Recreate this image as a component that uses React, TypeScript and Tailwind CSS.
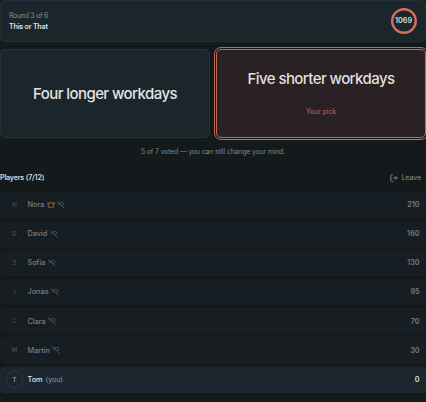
import React from "react"
import clsx from "clsx"

type Player = {
  name: string
  score: number
  host?: boolean
  you?: boolean
}

const players: Player[] = [
  { name: "Nora", score: 210, host: true },
  { name: "David", score: 160 },
  { name: "Sofia", score: 130 },
  { name: "Jonas", score: 95 },
  { name: "Clara", score: 70 },
  { name: "Martin", score: 30 },
  { name: "Tom", score: 0, you: true },
]

function CrownIcon() {
  return (
    <svg className="h-[7px] w-[8px] shrink-0 text-[#85592a]" viewBox="0 0 16 14" fill="none" stroke="currentColor" strokeWidth="2.2" strokeLinejoin="round">
      <path d="M1.500 3 4.800 5.500 8 2l3.200 3.500L14.500 3l-1.800 9.500H3.300L1.500 3Z" />
    </svg>
  )
}

function OfflineIcon() {
  return (
    <svg className="size-[8px] shrink-0 text-[#555b60]" viewBox="0 0 16 16" fill="none" stroke="currentColor" strokeWidth="1.8" strokeLinecap="round" strokeLinejoin="round">
      <path d="m1.500 1.500 13 13" />
      <path d="M1.500 5.500 3.500 4M7 3c3-.4 5.500.5 7.500 2.500L11 9" />
      <path d="M4.500 8c.8-.8 1.700-1.200 2.700-1.400" />
    </svg>
  )
}

function LeaveIcon() {
  return (
    <svg className="size-[8px]" viewBox="0 0 18 18" fill="none" stroke="currentColor" strokeWidth="2" strokeLinecap="round" strokeLinejoin="round">
      <path d="M6 1.500H3.500C2.700 1.500 2 2.200 2 3v12c0 .8.7 1.500 1.500 1.500H6" />
      <path d="M8 9h8M12.500 5.500 16 9l-3.500 3.500" />
    </svg>
  )
}

function TimerRing({ value }: { value: number }) {
  return (
    <div className="relative flex size-[26px] items-center justify-center text-[7.2px] font-semibold text-[#dce0df]">
      <svg className="absolute inset-0 size-full text-[#d3705a]" viewBox="0 0 26 26" fill="none">
        <circle cx="13" cy="13" r="11.800" stroke="currentColor" strokeWidth="2.400" />
      </svg>
      <span className="relative">{value}</span>
    </div>
  )
}

function PlayerRow({ player }: { player: Player }) {
  return (
    <li
      className={clsx(
        "flex h-[26px] items-center rounded-[4px] border pr-[5.5px] pl-[5px]",
        player.you ? "border-[#1e2930] bg-[#1b262e]" : "border-[#181f24] bg-[#171e23]"
      )}
    >
      <span
        className={clsx(
          "flex size-[17px] shrink-0 items-center justify-center rounded-full border text-[6px]",
          player.you ? "border-[#303a40] bg-[#1b242b] font-medium text-[#a9afb2]" : "border-[#1c2327] bg-[#171d21] text-[#52585c]"
        )}
      >
        {player.name[0]}
      </span>
      <span className={clsx("ml-[4.5px] text-[7.3px] font-medium", player.you ? "text-[#dde1e2]" : "text-[#777d80]")}>
        {player.name}
      </span>
      {player.you && <span className="ml-[3px] text-[7px] text-[#969da1]">(you)</span>}
      {!player.you && (
        <span className="ml-[2.5px] flex items-center gap-[2px]">
          {player.host && <CrownIcon />}
          <OfflineIcon />
        </span>
      )}
      <span className={clsx("ml-auto text-[7.2px] font-semibold", player.you ? "text-[#dde1e2]" : "text-[#777d80]")}>
        {player.score}
      </span>
    </li>
  )
}

export default function App() {
  return (
    <div className="h-[402px] w-[426px] overflow-hidden bg-[#14191b] font-['Inter',sans-serif] leading-none">
      <header className="flex h-[42px] items-center justify-between rounded-[4px] border border-[#242d33] bg-[#1b252c] pr-[8.5px] pl-[8px]">
        <div>
          <p className="text-[7px] leading-[11px] tracking-[-0.3px] text-[#838b90]">Round 3 of 6</p>
          <h1 className="text-[7.1px] leading-[11px] font-semibold tracking-[-0.2px] text-[#dde1e2]">This or That</h1>
        </div>
        <TimerRing value={1069} />
      </header>

      <div className="mt-[7px] grid grid-cols-[210px_210px] gap-[6px]">
        <button className="flex h-[89px] items-center justify-center rounded-[5px] border border-[#273137] bg-[#1b252c] text-[15px] font-medium tracking-[-0.58px] text-[#e1e4e2]">
          Four longer workdays
        </button>
        <button className="flex h-[89px] flex-col items-center rounded-[5px] border border-[#c36955] bg-[#292124] pt-[20px] outline outline-offset-1 outline-[#c36955]">
          <span className="text-[15px] leading-[18px] font-medium tracking-[-0.58px] text-[#e3dfdf]">Five shorter workdays</span>
          <span className="mt-[19px] text-[7px] leading-[10px] tracking-[-0.1px] text-[#c9634d]">Your pick</span>
        </button>
      </div>

      <p className="mt-[9px] text-center text-[7px] leading-[10px] tracking-[-0.2px] text-[#7d8488]">
        5 of 7 voted — you can still change your mind.
      </p>

      <div className="mt-[15px] flex h-[12px] items-center justify-between pr-[5px]">
        <h2 className="text-[7.1px] font-semibold tracking-[-0.18px] text-[#d7dbdc]">Players (7/12)</h2>
        <button className="flex items-center gap-[3px] text-[7.1px] tracking-[-0.1px] text-[#899095]">
          <LeaveIcon />
          Leave
        </button>
      </div>

      <ul className="mt-[7.500px] flex flex-col gap-[3.200px]">
        {players.map((player) => (
          <PlayerRow key={player.name} player={player} />
        ))}
      </ul>
    </div>
  )
}
